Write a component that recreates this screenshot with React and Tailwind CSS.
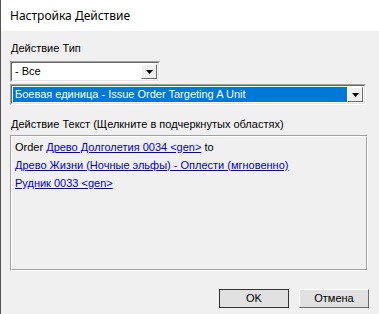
import React from 'react';

const DropArrow = () => (
  <div className="w-[16px] self-stretch flex items-center justify-center bg-[#f0f0f0] border-t border-l border-t-white border-l-white border-b border-r border-b-[#696969] border-r-[#696969]">
    <svg width="7" height="4" viewBox="0 0 7 4">
      <path d="M0 0h7L3.5 4z" fill="#000" />
    </svg>
  </div>
);

const Combo = ({ width, selected, children }) => (
  <div
    className={`${width} h-[21px] flex bg-white border-t border-l border-t-[#a0a0a0] border-l-[#a0a0a0] border-b border-r border-b-white border-r-white`}
  >
    <div className="flex-1 flex p-[1px] border-t border-l border-t-[#696969] border-l-[#696969] border-b border-r border-b-[#e3e3e3] border-r-[#e3e3e3]">
      <div className={`flex-1 flex items-center px-[2px] ${selected ? 'bg-[#0078d7] text-white' : 'text-black'}`}>
        {children}
      </div>
      <DropArrow />
    </div>
  </div>
);

const LinkText = ({ children }) => (
  <span className="text-[#0000cc] underline underline-offset-1">{children}</span>
);

const Button = ({ children, primary }) => (
  <button
    className={`w-[70px] h-[19px] flex items-center justify-center bg-[#e1e1e1] text-black ${primary ? 'border border-[#333]' : 'border-t border-l border-t-white border-l-white border-b border-r border-b-[#696969] border-r-[#696969]'}`}
  >
    {children}
  </button>
);

export default function App() {
  return (
    <div
      className="w-[379px] h-[314px] bg-[#f0f0f0] border-l border-[#555] flex flex-col overflow-hidden"
      style={{ fontFamily: '"Liberation Sans", Arial, sans-serif' }}
    >
      <div className="h-[31px] bg-white flex items-center pl-[9px] text-[12px] text-black" style={{ fontFamily: '"Noto Sans", sans-serif' }}>
        Настройка Действие
      </div>
      <div className="flex flex-col px-[9px] text-[11px] text-black">
        <div className="mt-[10px] h-[14px] leading-[14px] pl-[1px]">Действие Тип</div>
        <div className="mt-[6px]">
          <Combo width="w-[150px]">- Все</Combo>
        </div>
        <div className="mt-[2px]">
          <Combo width="w-[356px]" selected>
            Боевая единица - Issue Order Targeting A Unit
          </Combo>
        </div>
        <div className="mt-[12px] h-[14px] leading-[14px] pl-[1px]">
          Действие Текст (Щелкните в подчеркнутых областях)
        </div>
        <div className="mt-[4px] w-[358px] h-[136px] border-t border-l border-t-[#a0a0a0] border-l-[#a0a0a0] border-b border-r border-b-white border-r-white">
          <div className="h-full border-t border-l border-t-white border-l-white border-b border-r border-b-[#a0a0a0] border-r-[#a0a0a0] px-[3px] pt-[1px] leading-[18px]">
            <div>
              Order <LinkText>Древо Долголетия 0034 &lt;gen&gt;</LinkText> to
            </div>
            <div>
              <LinkText>Древо Жизни (Ночные эльфы) - Оплести (мгновенно)</LinkText>
            </div>
            <div>
              <LinkText>Рудник 0033 &lt;gen&gt;</LinkText>
            </div>
          </div>
        </div>
        <div className="mt-[18px] flex justify-end gap-[10px] pr-[1px]">
          <Button primary>OK</Button>
          <Button>Отмена</Button>
        </div>
      </div>
    </div>
  );
}
